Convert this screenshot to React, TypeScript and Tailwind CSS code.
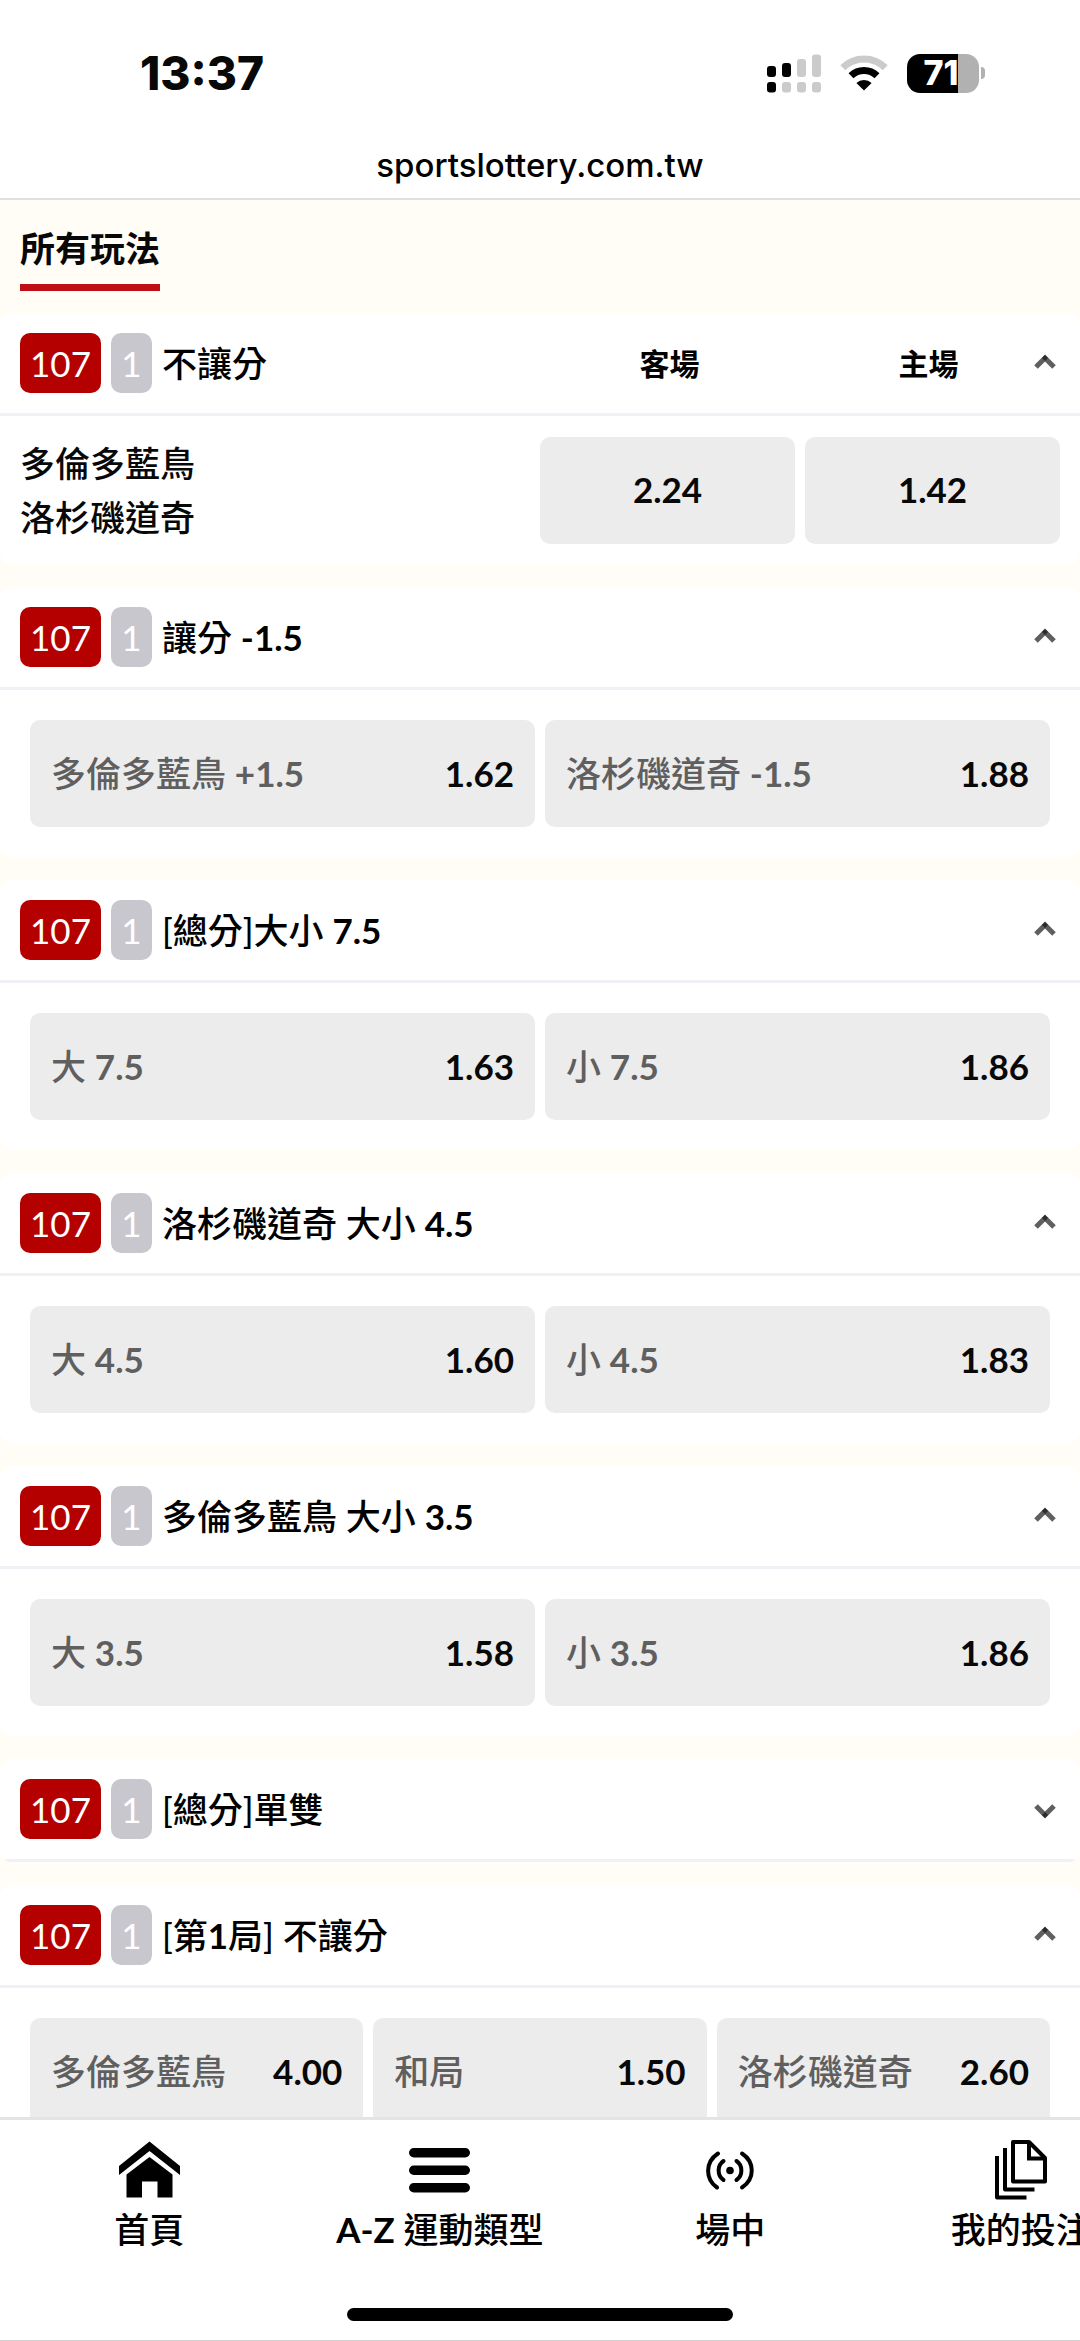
import { useState } from "react";

type Option = { label: string; odds: string };

type Market = {
    title: string;
    columns?: string[];
    teams?: string[];
    options: Option[];
    closed?: boolean;
};

const markets: Market[] = [
    {
        title: "不讓分",
        columns: ["客場", "主場"],
        teams: ["多倫多藍鳥", "洛杉磯道奇"],
        options: [
            { label: "多倫多藍鳥", odds: "2.24" },
            { label: "洛杉磯道奇", odds: "1.42" },
        ],
    },
    {
        title: "讓分 -1.5",
        options: [
            { label: "多倫多藍鳥 +1.5", odds: "1.62" },
            { label: "洛杉磯道奇 -1.5", odds: "1.88" },
        ],
    },
    {
        title: "[總分]大小 7.5",
        options: [
            { label: "大 7.5", odds: "1.63" },
            { label: "小 7.5", odds: "1.86" },
        ],
    },
    {
        title: "洛杉磯道奇 大小 4.5",
        options: [
            { label: "大 4.5", odds: "1.60" },
            { label: "小 4.5", odds: "1.83" },
        ],
    },
    {
        title: "多倫多藍鳥 大小 3.5",
        options: [
            { label: "大 3.5", odds: "1.58" },
            { label: "小 3.5", odds: "1.86" },
        ],
    },
    {
        title: "[總分]單雙",
        closed: true,
        options: [],
    },
    {
        title: "[第1局] 不讓分",
        options: [
            { label: "多倫多藍鳥", odds: "4.00" },
            { label: "和局", odds: "1.50" },
            { label: "洛杉磯道奇", odds: "2.60" },
        ],
    },
];

// Latin runs are set heavier than the Chinese around them
const Mixed = ({ text }: { text: string }) => (
    <span className="font-medium">
        {text.split(/([\w.+-]+)/).map((part, i) =>
            i % 2 ? (
                <span key={i} className="font-bold">
                    {part}
                </span>
            ) : (
                part
            )
        )}
    </span>
);

const SignalIcon = () => (
    <svg width="54" height="39" viewBox="0 0 54 39" aria-hidden="true">
        <rect x="0" y="12" width="9" height="11" rx="3" />
        <rect x="15" y="9" width="9" height="14" rx="3" />
        <rect x="30" y="5" width="9" height="18" rx="3" fill="#cbcbcb" />
        <rect x="45" y="0.5" width="9" height="22.5" rx="3" fill="#cbcbcb" />
        <rect x="0" y="28" width="9" height="10.5" rx="3" />
        <rect x="15" y="28" width="9" height="10.5" rx="3" fill="#cbcbcb" />
        <rect x="30" y="28" width="9" height="10.5" rx="3" fill="#cbcbcb" />
        <rect x="45" y="28" width="9" height="10.5" rx="3" fill="#cbcbcb" />
    </svg>
);

const WifiIcon = () => (
    <svg width="48" height="36" viewBox="0 0 48 36" fill="none" aria-hidden="true">
        <path d="M2.8 12.8A30 30 0 0 1 45.2 12.8" stroke="#cbcbcb" strokeWidth="7" />
        <path d="M11 20.8A18.5 18.5 0 0 1 37 20.8" stroke="#000" strokeWidth="7" />
        <path d="M24 35.5L16.4 28A11 11 0 0 1 31.6 28Z" fill="#000" />
    </svg>
);

const Chevron = ({ open }: { open: boolean }) => (
    <svg width="30" height="30" viewBox="0 0 30 30" fill="none" aria-hidden="true">
        {open ? (
            <>
                <path d="M6 19L15 10L24 19" stroke="#5f5f5f" strokeWidth="5" />
                <path d="M15 7L18 10L15 13L12 10Z" fill="#2b2b2b" />
            </>
        ) : (
            <>
                <path d="M6 12L15 21L24 12" stroke="#5f5f5f" strokeWidth="5" />
                <path d="M15 18L18 21L15 24L12 21Z" fill="#2b2b2b" />
            </>
        )}
    </svg>
);

const HomeIcon = () => (
    <svg width="61" height="60" viewBox="0 0 61 60" aria-hidden="true">
        <path d="M30.5 1.5L61 26V35L30.5 11L0 35V26Z" />
        <path d="M30.5 17L53.5 34.5V57.5H38.5V41.5H23V57.5H7.5V34.5Z" />
    </svg>
);

const MenuIcon = () => (
    <svg width="61" height="60" viewBox="0 0 61 60" aria-hidden="true">
        <rect y="8" width="61" height="9.5" rx="4.75" />
        <rect y="25.5" width="61" height="9.5" rx="4.75" />
        <rect y="43" width="61" height="9.5" rx="4.75" />
    </svg>
);

const LiveIcon = () => (
    <svg width="48" height="60" viewBox="0 0 48 60" fill="none" stroke="#000" strokeWidth="4" strokeLinecap="round" aria-hidden="true">
        <path d="M12 13.5C-1 22 -1 39 11 47.5" />
        <path d="M36 13.5C49 22 49 39 36 47.5" />
        <path d="M17.5 21C11 25.5 11 35.5 17.5 40" />
        <path d="M30.5 21C37 25.5 37 35.5 30.5 40" />
        <circle cx="24" cy="30.5" r="3.8" fill="#000" stroke="none" />
    </svg>
);

const BetsIcon = () => (
    <svg width="52" height="60" viewBox="0 0 52 60" fill="none" stroke="#000" strokeWidth="4" strokeLinejoin="round" aria-hidden="true">
        <path d="M18 2H34L50 18V41.5H18Z" />
        <path d="M34 2V18.5H50" strokeLinejoin="miter" />
        <path d="M10 8V49.5H39.5" />
        <path d="M2 16V57.5H31.5" />
    </svg>
);

const StatusBar = () => (
    <div className="flex items-center justify-between pt-[47px] pr-[95px] pl-[140px] font-[Inter,sans-serif]">
        <span className="text-[46px] leading-[52px] font-extrabold">13:37</span>
        <div className="flex items-center gap-[19px]">
            <SignalIcon />
            <WifiIcon />
            <div className="flex items-center gap-0.5">
                <span className="flex h-[39px] w-[72px] items-center justify-center rounded-[13px] bg-linear-to-r from-black from-[71%] to-[#b1b1b1] to-[71%] pr-1 text-[34px] leading-none font-extrabold text-white">
                    71
                </span>
                <span className="h-3 w-1 rounded-r-full bg-[#b1b1b1]" />
            </div>
        </div>
    </div>
);

const MarketCard = ({ market }: { market: Market }) => {
    const [open, setOpen] = useState(!market.closed);

    return (
        <section className="overflow-hidden rounded-xl bg-white">
            <div className="grid grid-cols-2 items-center border-b-3 border-[#f0f0f6] px-5 py-5">
                <div className="flex items-center gap-2.5 whitespace-nowrap">
                    <span className="flex h-[60px] w-[81px] items-center justify-center rounded-[10px] bg-[#b50000] text-white">
                        107
                    </span>
                    <span className="flex h-[60px] w-[41px] items-center justify-center rounded-[10px] bg-[#c8c7ce] text-white">
                        1
                    </span>
                    <h2 className="text-black">
                        <Mixed text={market.title} />
                    </h2>
                </div>
                <div className="flex items-center justify-end gap-14 pl-7">
                    {market.columns?.map((column) => (
                        <span key={column} className="flex-1 text-center text-[30px] leading-10 font-bold text-black">
                            {column}
                        </span>
                    ))}
                    <button
                        type="button"
                        aria-label={market.title}
                        aria-expanded={open}
                        onClick={() => setOpen(!open)}
                        className="-ml-14"
                    >
                        <Chevron open={open} />
                    </button>
                </div>
            </div>
            {open && market.teams && (
                <div className="grid grid-cols-2 items-center p-5">
                    <div className="font-medium">
                        {market.teams.map((team) => (
                            <p key={team}>{team}</p>
                        ))}
                    </div>
                    <div className="grid grid-cols-2 gap-2.5">
                        {market.options.map((option) => (
                            <button
                                key={option.label}
                                type="button"
                                aria-label={option.label + " " + option.odds}
                                className="h-[107px] rounded-[10px] bg-[#ececec] pb-0.5 font-bold"
                            >
                                {option.odds}
                            </button>
                        ))}
                    </div>
                </div>
            )}
            {open && !market.teams && (
                <div className="flex gap-2.5 p-[30px]">
                    {market.options.map((option) => (
                        <button
                            key={option.label}
                            type="button"
                            className="flex h-[107px] flex-1 items-center justify-between rounded-[10px] bg-[#ececec] px-[21px] pb-0.5 whitespace-nowrap"
                        >
                            <span className="text-[#5f5f5f]">
                                <Mixed text={option.label} />
                            </span>
                            <span className="font-bold">{option.odds}</span>
                        </button>
                    ))}
                </div>
            )}
        </section>
    );
};

const navItems = [
    { label: "首頁", icon: <HomeIcon /> },
    { label: "A-Z 運動類型", icon: <MenuIcon /> },
    { label: "場中", icon: <LiveIcon /> },
    { label: "我的投注", icon: <BetsIcon /> },
];

const App = () => {
    return (
        <div className="flex h-screen flex-col overflow-hidden bg-[#fffdf5] font-[Lato,'Noto_Sans_CJK_TC',sans-serif] text-[35px] leading-[54px] text-[#080808]">
            <header className="shrink-0 border-b-2 border-[#e0e0de] bg-white">
                <StatusBar />
                <p className="pt-11 pb-[11px] text-center font-[Inter,sans-serif] text-[33px] leading-11 font-medium text-black">
                    sportslottery.com.tw
                </p>
            </header>
            <main className="min-h-0 flex-1 overflow-hidden">
                <div className="flex px-5 pt-[21px] pb-[22px]">
                    <button type="button" className="border-b-7 border-[#be0f14] pb-[9px] font-bold">
                        所有玩法
                    </button>
                </div>
                <div className="flex flex-col gap-[23px]">
                    {markets.map((market) => (
                        <MarketCard key={market.title} market={market} />
                    ))}
                </div>
            </main>
            <nav className="shrink-0 border-t-3 border-b border-t-[#e4e4e4] border-b-[#d0d0d0] bg-white text-black">
                <ul className="flex pt-5 pl-1">
                    {navItems.map((item) => (
                        <li key={item.label} className="w-[27%] shrink-0">
                            <a href="#" className="flex flex-col items-center gap-0.5 whitespace-nowrap">
                                {item.icon}
                                <Mixed text={item.label} />
                            </a>
                        </li>
                    ))}
                </ul>
                <div className="mx-auto mt-[52px] mb-[19px] h-[13px] w-[386px] rounded-full bg-black" />
            </nav>
        </div>
    );
};

export default App;
